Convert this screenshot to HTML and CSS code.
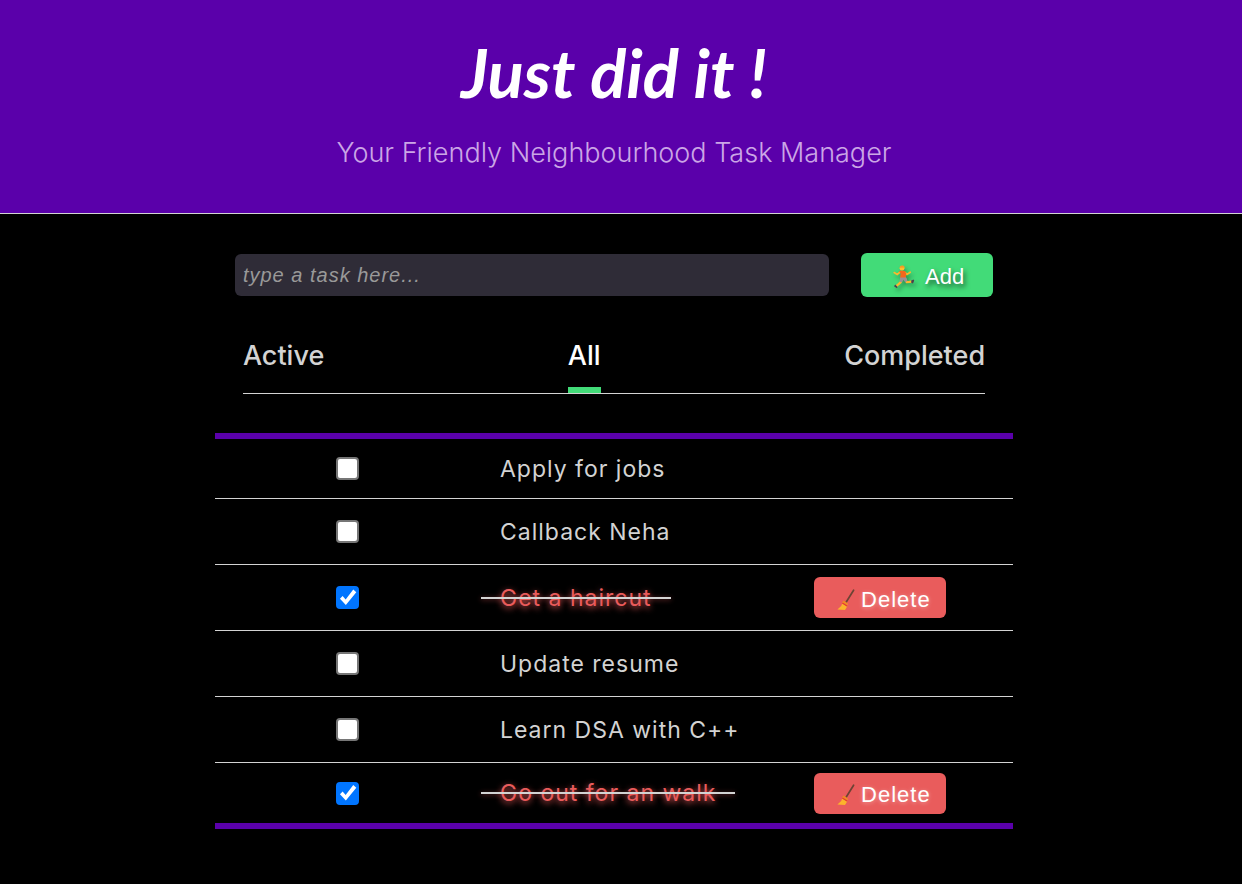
FILE: index.html
```html
<!DOCTYPE html>
<html lang="en">
<head>
<meta charset="utf-8">
<meta name="viewport" content="width=device-width, initial-scale=1">
<title>Just did it !</title>
<link rel="stylesheet" href="styles.css">
</head>
<body>
<svg class="defs" aria-hidden="true">
  <symbol id="runner" viewBox="0 0 22 24">
    <path d="M8.5 13 L7.8 17.2 L3.4 21" fill="none" stroke="#fbb62c" stroke-width="2.3" stroke-linejoin="round"/>
    <path d="M12 13 L13.6 17.2 L18.6 16.6" fill="none" stroke="#fbb62c" stroke-width="2.1" stroke-linejoin="round"/>
    <path d="M2.2 19.6 L4.6 22 L3.8 23.2 L1 21.2z" fill="#4b3f4e"/>
    <path d="M18.2 15.6 L20.6 14.6 L21.2 15.4 L20 18.4 L18.4 18z" fill="#4b3f4e"/>
    <path d="M7.4 11.6 L12.8 11.6 L14.4 15.8 L12.2 17.2 L10.4 14.8 L8.8 17.4 L6.6 16.4z" fill="#9a8f96"/>
    <path d="M7 7.2 L4.2 9.4 L1.2 7.6" fill="none" stroke="#fbb62c" stroke-width="1.7" stroke-linecap="round"/>
    <path d="M12.2 7.6 L14 9.4 L17.2 7.2" fill="none" stroke="#fbb62c" stroke-width="1.7" stroke-linecap="round"/>
    <path d="M6 6.2 L8 5.4 L12 6 L13.2 8.4 L12.8 12.6 L7.2 12.6 L7.6 8.6z" fill="#f4661e"/>
    <circle cx="9" cy="3.2" r="2.4" fill="#fbc02d"/>
    <path d="M6.4 2.8 Q6.8 0.3 9.4 0.4 Q12 0.6 11.6 3.4 L10.4 2.4z" fill="#f59a23"/>
  </symbol>
  <symbol id="broom" viewBox="0 0 18 22">
    <path d="M16.6 1.2 L8.6 14" stroke="#6d4334" stroke-width="1.7" stroke-linecap="round"/>
    <path d="M6 12.5 L10.4 15.3 L9.6 18.4 L8 21 L0.4 20.6 L4.2 17z" fill="#fcb32c"/>
    <path d="M6.6 11.5 L10.8 14.2 L10 17.2 L5 14.3z" fill="#f08a24"/>
    <path d="M5.3 14 L10 17" stroke="#e53935" stroke-width="1.3"/>
  </symbol>
</svg>

<header class="header">
  <h1 class="title">Just did it !</h1>
  <p class="tagline">Your Friendly Neighbourhood Task Manager</p>
</header>

<main class="main">
  <form class="entry">
    <input class="entry-input" type="text" placeholder="type a task here..." aria-label="Task">
    <button class="button button-add" type="button"><svg class="runner" aria-hidden="true"><use href="#runner"/></svg>Add</button>
  </form>

  <nav class="tabs">
    <button class="tab" type="button">Active</button>
    <button class="tab tab-current" type="button">All</button>
    <button class="tab" type="button">Completed</button>
  </nav>

  <table class="tasks">
    <tbody>
      <tr>
        <td class="cell-check"><input class="check" type="checkbox" id="t1"></td>
        <td><label class="task" for="t1">Apply for jobs</label></td>
        <td></td>
      </tr>
      <tr>
        <td class="cell-check"><input class="check" type="checkbox" id="t2"></td>
        <td><label class="task" for="t2">Callback Neha</label></td>
        <td></td>
      </tr>
      <tr>
        <td class="cell-check"><input class="check" type="checkbox" id="t3" checked></td>
        <td><label class="task task-done" for="t3">Get a haircut</label></td>
        <td class="cell-action"><button class="button button-delete" type="button"><svg class="broom" aria-hidden="true"><use href="#broom"/></svg>Delete</button></td>
      </tr>
      <tr>
        <td class="cell-check"><input class="check" type="checkbox" id="t4"></td>
        <td><label class="task" for="t4">Update resume</label></td>
        <td></td>
      </tr>
      <tr>
        <td class="cell-check"><input class="check" type="checkbox" id="t5"></td>
        <td><label class="task" for="t5">Learn DSA with C++</label></td>
        <td></td>
      </tr>
      <tr>
        <td class="cell-check"><input class="check" type="checkbox" id="t6" checked></td>
        <td><label class="task task-done" for="t6">Go out for an walk</label></td>
        <td class="cell-action"><button class="button button-delete" type="button"><svg class="broom" aria-hidden="true"><use href="#broom"/></svg>Delete</button></td>
      </tr>
    </tbody>
  </table>
</main>
</body>
</html>
```
FILE: styles.css
```css
* {
  box-sizing: border-box;
}

body {
  margin: 0;
  background: #000;
  color: #d3d3d3;
  font-family: Inter, "Open Sans", sans-serif;
}

.defs {
  display: none;
}

.header {
  padding: 32px 14px 40px 0;
  background: #5a00aa;
  border-bottom: 1px solid #d3d3d3;
  text-align: center;
}

.title {
  margin: 0 0 21px;
  color: #fff;
  font: italic 700 67px/80px Lato, cursive;
}

.tagline {
  margin: 0;
  color: #cba6e6;
  font-weight: 300;
  font-size: 27px;
  line-height: 40px;
}

.main {
  display: flex;
  flex-direction: column;
  align-items: center;
  padding: 39px 14px 55px 0;
}

.entry {
  display: flex;
  align-items: center;
  gap: 32px;
  width: 65%;
  padding: 0 20px;
}

.entry-input {
  flex: 1;
  min-width: 0;
  height: 42px;
  padding: 0 8px;
  border: 0;
  border-radius: 6px;
  background: #2f2c37;
  color: #fff;
  font: 20px "Liberation Sans", sans-serif;
  letter-spacing: 1px;
}

.entry-input::placeholder {
  color: #999;
  font-style: italic;
}

.button {
  display: inline-flex;
  align-items: center;
  width: 132px;
  border: 0;
  border-radius: 6px;
  color: #fff;
  font: 22px "Liberation Sans", sans-serif;
}

.button-add {
  gap: 10px;
  height: 44px;
  padding: 3px 0 0 32px;
  background: #42db78;
  text-shadow: 2px 3px 5px rgba(0, 0, 0, 0.6);
}

.runner {
  width: 22px;
  height: 24px;
  filter: drop-shadow(2px 3px 2px rgba(0, 0, 0, 0.35));
}

.tabs {
  display: flex;
  justify-content: space-between;
  width: calc(65% - 56px);
  margin-top: 40px;
  border-bottom: 1px solid #d3d3d3;
}

.tab {
  height: 56px;
  padding: 0 0 12px;
  border: 0;
  border-bottom: 6px solid transparent;
  background: none;
  color: #d3d3d3;
  font: 500 27px/38px Inter, "Open Sans", sans-serif;
}

.tab-current {
  border-bottom-color: #42db78;
  color: #fff;
}

.tasks {
  width: 65%;
  margin-top: 39px;
  border: solid #5a00aa;
  border-width: 6px 0;
  border-spacing: 0;
  table-layout: fixed;
}

.tasks td {
  height: 66px;
  padding: 0;
  border-bottom: 1px solid #d3d3d3;
  vertical-align: middle;
}

.tasks tr:first-child td,
.tasks tr:last-child td {
  height: 60px;
}

.tasks tr:last-child td {
  border-bottom: 0;
}

.cell-check,
.cell-action {
  text-align: center;
}

.check {
  appearance: none;
  display: block;
  position: relative;
  width: 23px;
  height: 23px;
  margin: 0 auto;
  border: 2px solid #767676;
  border-radius: 4px;
  background: #fff;
}

.check:checked {
  border-color: #0075ff;
  background: #0075ff;
}

.check:checked::after {
  content: "";
  position: absolute;
  inset: 0;
  background: #fff;
  clip-path: polygon(8% 56%, 22% 42%, 38% 60%, 78% 8%, 94% 22%, 39% 90%);
}

.task {
  display: inline-block;
  position: relative;
  padding: 0 19px;
  font-size: 23px;
  line-height: 32px;
  letter-spacing: 1px;
  white-space: nowrap;
}

.task-done {
  color: #e95c5c;
  text-shadow: 0 2px 6px #e95c5c;
}

.task-done::after {
  content: "";
  position: absolute;
  top: 50%;
  left: 0;
  width: 100%;
  height: 2px;
  margin-top: -1px;
  background: #d3d3d3;
  box-shadow: 0 1px 5px rgba(233, 92, 92, 0.5);
}

.button-delete {
  gap: 6px;
  height: 41px;
  padding: 4px 0 0 23px;
  background: #e95c5c;
  letter-spacing: 1px;
  vertical-align: middle;
  text-shadow: 0 1px 4px rgba(255, 255, 255, 0.4);
}

.broom {
  width: 18px;
  height: 22px;
}
```
